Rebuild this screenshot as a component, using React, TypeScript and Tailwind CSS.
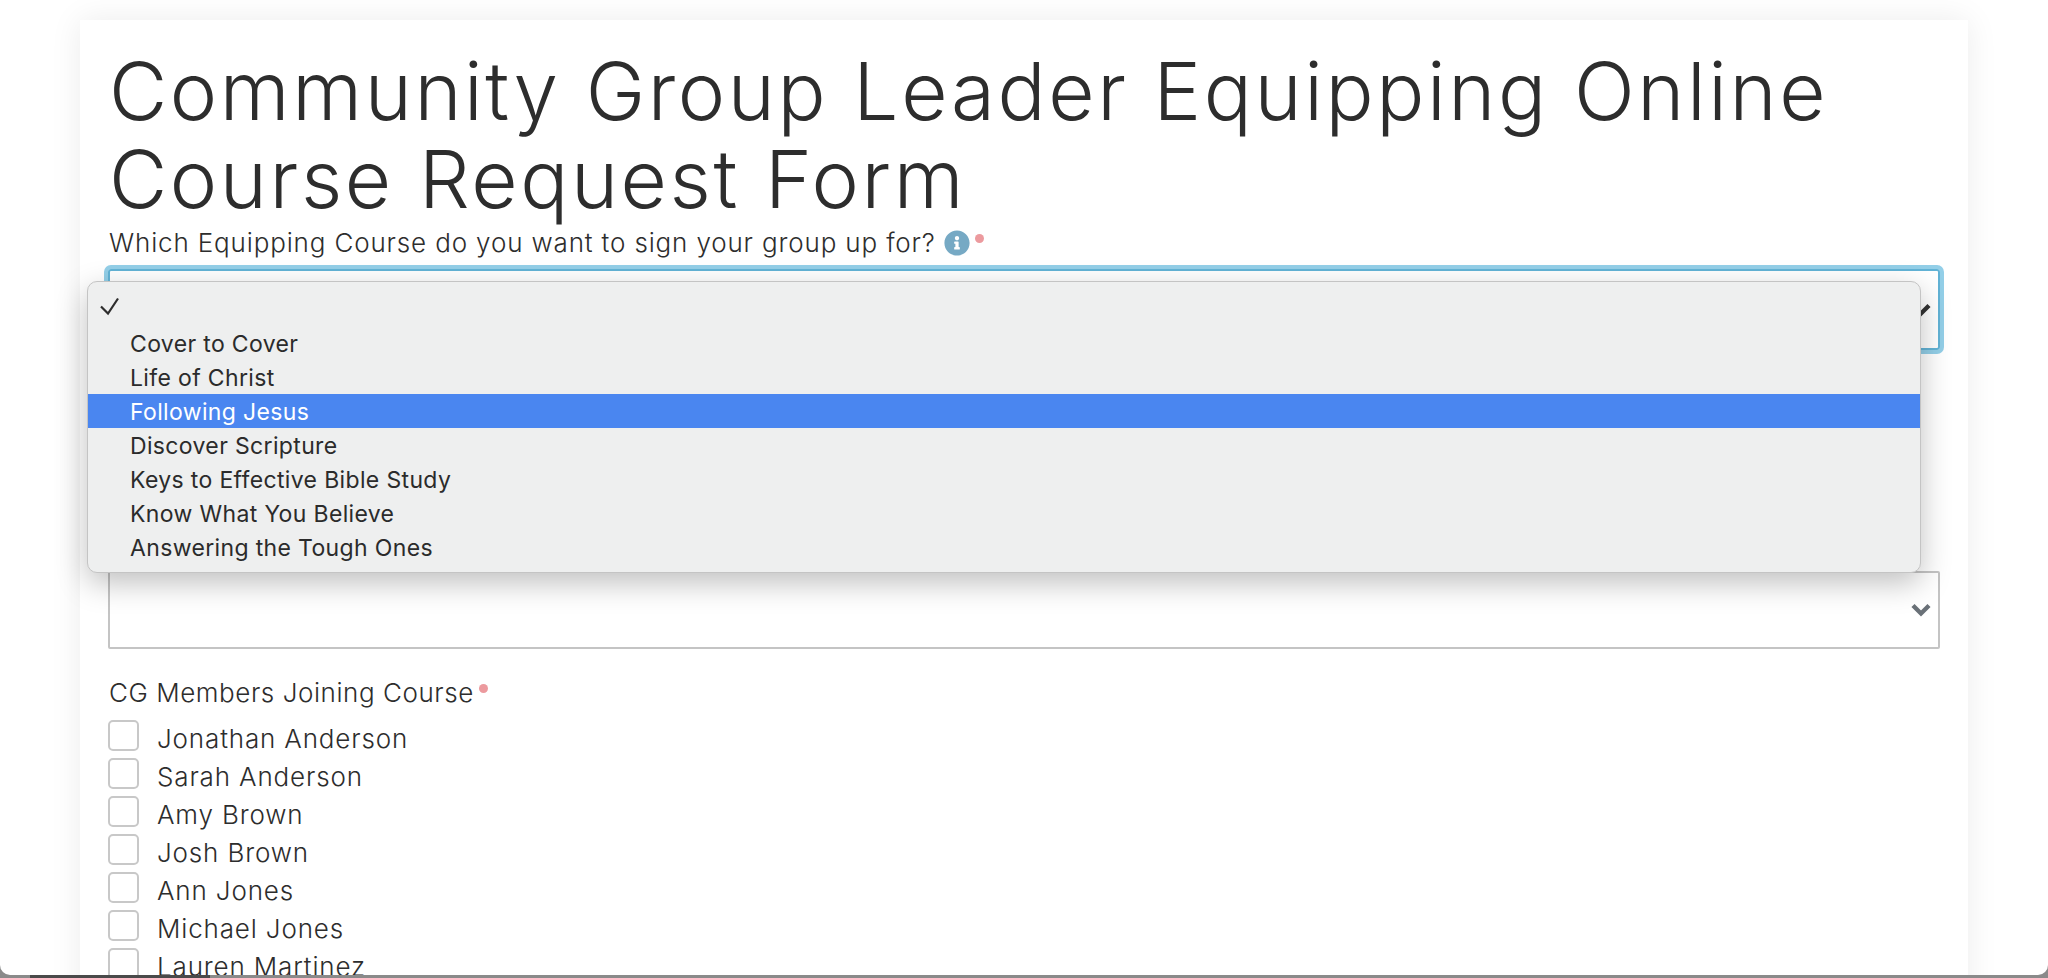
import React from 'react';
import { FaInfoCircle } from 'react-icons/fa';

const courses = [
  'Cover to Cover',
  'Life of Christ',
  'Following Jesus',
  'Discover Scripture',
  'Keys to Effective Bible Study',
  'Know What You Believe',
  'Answering the Tough Ones',
];

const members = [
  'Jonathan Anderson',
  'Sarah Anderson',
  'Amy Brown',
  'Josh Brown',
  'Ann Jones',
  'Michael Jones',
  'Lauren Martinez',
];

const RequiredDot = () => <span className="ml-[5px] mb-[10px] inline-block h-[9px] w-[9px] rounded-full bg-[#ec9a9e]" />;

const Chevron = ({ color }: { color: string }) => (
  <svg className="h-[14px] w-[20px]" viewBox="0 0 20 14" fill="none" stroke={color} strokeWidth="4.4">
    <path d="M2 2.5l8 8 8-8" />
  </svg>
);

const App: React.FC = () => {
  return (
    <div className="relative h-[978px] w-[2048px] overflow-hidden bg-[#8a8a8a] font-['Inter',sans-serif] text-[#2d2d2d]">
      {/* window */}
      <div className="h-[975px] overflow-hidden rounded-b-[10px] bg-white px-[80px] pt-[20px]">
        <div className="h-[1100px] bg-white pl-[29px] pr-[28px] pt-[27px] shadow-[0_0_30px_rgba(0,0,0,0.08)]">
          <h1 className="text-[80px] font-light leading-[88px] tracking-[2.6px]">
            Community Group Leader Equipping Online Course Request Form
          </h1>

          <div className="mt-[5px] flex h-[30px] items-center text-[26px] font-light leading-[30px] tracking-[0.85px]">
            <span>Which Equipping Course do you want to sign your group up for?</span>
            <FaInfoCircle className="ml-[8px] text-[26px] text-[#76a9c4]" />
            <RequiredDot />
          </div>

          {/* focused select, sits under the open menu */}
          <div className="ml-[-1px] mt-[11px] flex h-[81px] items-center justify-end rounded-[3px] border-2 border-[#62b3d6] pr-[7px] shadow-[0_0_0_4px_#93cfe8]">
            <Chevron color="#333333" />
          </div>

          <div className="ml-[-1px] mt-[221px] flex h-[78px] items-center justify-end rounded-[2px] border-2 border-[#c4c4c4] pr-[7px]">
            <Chevron color="#6a7178" />
          </div>

          <div className="mt-[29px] flex h-[30px] items-center text-[26px] font-light leading-[30px] tracking-[0.56px]">
            <span>CG Members Joining Course</span>
            <RequiredDot />
          </div>

          <div className="ml-[-1px] mt-[12px] flex flex-col gap-[7px]">
            {members.map((name) => (
              <label key={name} className="flex h-[31px] items-center">
                <span className="h-[31px] w-[31px] shrink-0 rounded-[5px] border-2 border-[#c8c8c8] bg-white" />
                <span className="ml-[18px] mt-[6px] text-[26px] font-light leading-[30px] tracking-[0.85px]">{name}</span>
              </label>
            ))}
          </div>
        </div>
      </div>

      {/* bit of the page behind the window */}
      <div className="absolute bottom-0 left-[30px] h-[3px] w-[180px] bg-[#4a4a4a]" />

      {/* open native select menu */}
      <div className="absolute left-[87px] top-[281px] h-[292px] w-[1834px] rounded-[10px] border border-[#c4c4c4] bg-[#eeefef] pt-[8px] shadow-[0_10px_30px_rgba(0,0,0,0.25)]">
        <svg className="absolute left-[12px] top-[15px] h-[20px] w-[20px]" viewBox="0 0 20 20" fill="none" stroke="#2d2d2d" strokeWidth="2.2">
          <path d="M1 9.5L8 16.5 18 1.5" />
        </svg>
        <div className="h-[36px]" />
        <ul className="text-[23px] leading-[36px] tracking-[0.35px] text-[#2b2b2b]">
          {courses.map((course) => (
            <li key={course} className={course === 'Following Jesus' ? 'h-[34px] bg-[#4a86f0] pl-[42px] text-white' : 'h-[34px] pl-[42px]'}>
              {course}
            </li>
          ))}
        </ul>
      </div>
    </div>
  );
};

export default App;
